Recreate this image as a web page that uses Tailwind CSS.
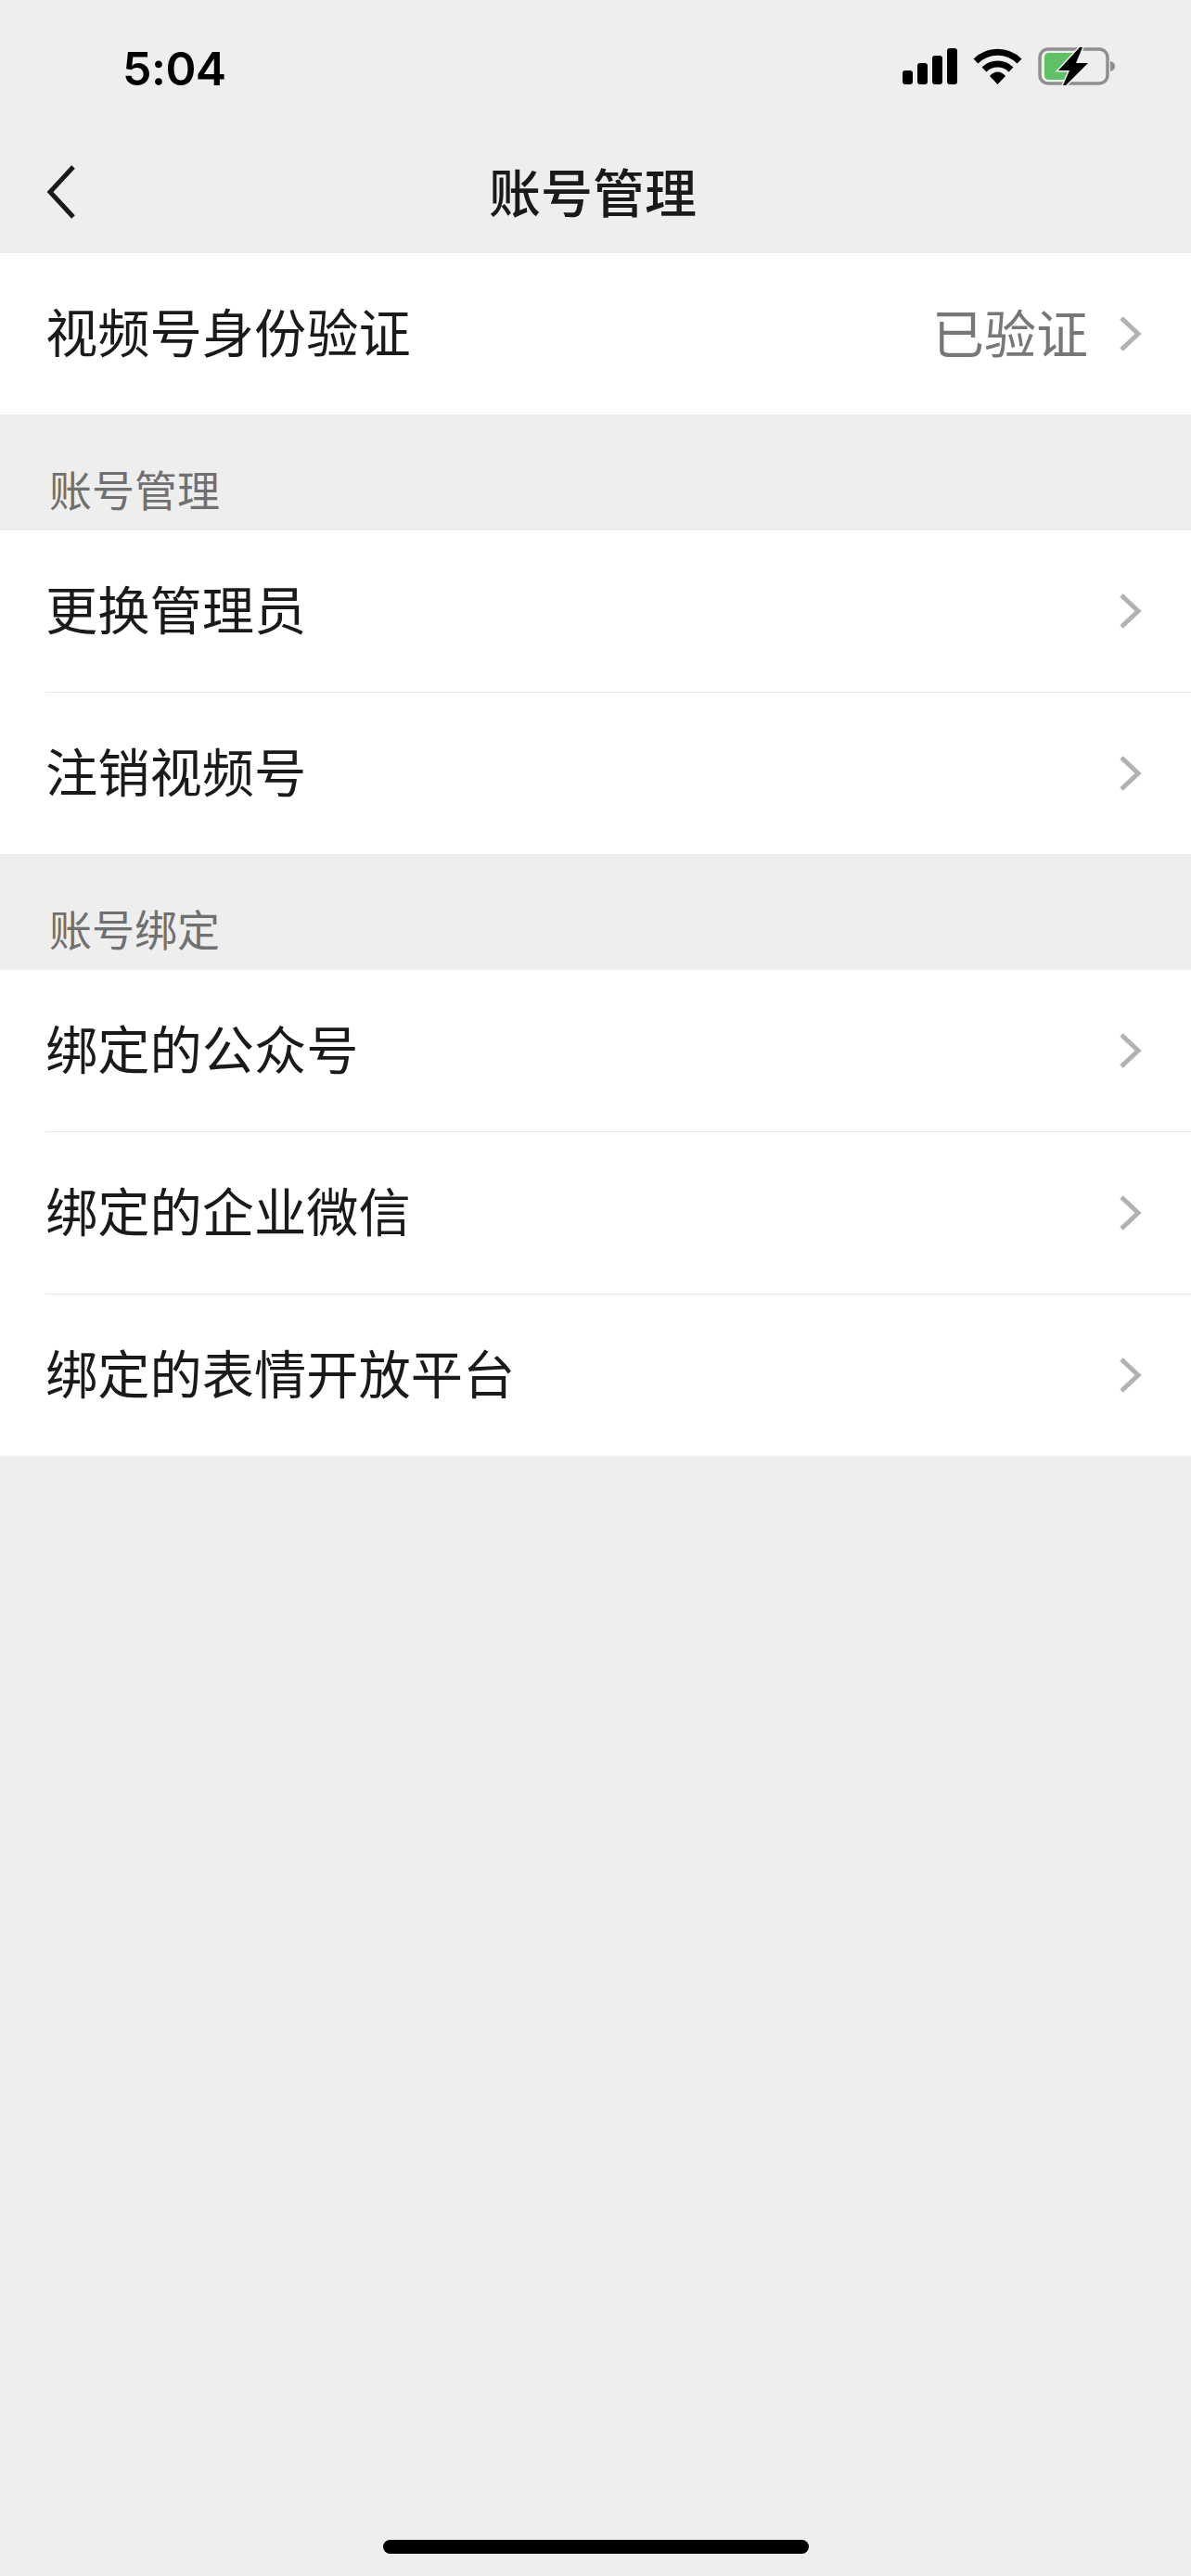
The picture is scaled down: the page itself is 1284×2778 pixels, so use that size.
<!DOCTYPE html>
<html lang="zh-CN">
<head>
<meta charset="utf-8">
<script src="https://cdn.jsdelivr.net/npm/@tailwindcss/browser@4"></script>
<title>账号管理</title>
</head>
<body class="bg-[#eeeeee] font-['Noto_Sans_CJK_SC','Noto_Sans',sans-serif]">
<div class="w-[1284px] h-[2778px] bg-[#eeeeee] flex flex-col relative overflow-hidden">
  <div class="h-[144px] flex items-center justify-between pl-[132px] pr-[82px] shrink-0">
    <span class="font-['Inter',sans-serif] font-semibold text-[50px] leading-none text-black tracking-[-0.5px] pt-[3px]">5:04</span>
    <svg width="229" height="42" viewBox="0 0 229 42" class="block">
      <rect x="0" y="25" width="11" height="15" rx="3" fill="#000"/>
      <rect x="16" y="17" width="11" height="23" rx="3" fill="#000"/>
      <rect x="32" y="9" width="11" height="31" rx="3" fill="#000"/>
      <rect x="48" y="1" width="11" height="39" rx="3" fill="#000"/>
      <path d="M79 15 C92 2 113 2 126 15" fill="none" stroke="#000" stroke-width="7" stroke-linecap="butt"/>
      <path d="M88 24 C96 16 109 16 117 24" fill="none" stroke="#000" stroke-width="7" stroke-linecap="butt"/>
      <path d="M94 31 C99 25 106 25 111 31 L102.500 40 Z" fill="#000"/>
      <rect x="148" y="2" width="73" height="37" rx="9" fill="none" stroke="#8f8f8f" stroke-width="3.500"/>
      <path d="M224 15 C228 16 229 18 229 20.500 C229 23 228 25 224 26 Z" fill="#8f8f8f"/>
      <path d="M158 6 L187 6 L172 24 L182 24 L175 35 L158 35 Q153 35 153 30 L153 11 Q153 6 158 6 Z" fill="#5fc065"/>
      <path d="M191 0 L194 0 L187 17 L200 17 L176 41 L173 41 L180 25 L168 25 Z" fill="#000" stroke="#eeeeee" stroke-width="3" paint-order="stroke"/>
    </svg>
  </div>
  <div class="h-[129px] flex items-center justify-center relative shrink-0 pr-[6px]">
    <svg width="36" height="60" viewBox="0 0 36 60" class="absolute left-[48px] top-[32px]">
      <path d="M31 4 L6 31 L31 58" fill="none" stroke="#1a1a1a" stroke-width="5"/>
    </svg>
    <span class="text-[56px] leading-none font-medium text-[#1a1a1a] pb-[8px]">账号管理</span>
  </div>

  <div class="bg-white shrink-0">
    <div class="h-[174px] flex items-center pl-[49px] pr-[53px]">
      <span class="flex-1 text-[56.250px] leading-none text-[#1a1a1a] pb-[7px]">视频号身份验证</span>
      <span class="text-[56px] leading-none text-[#777777] mr-[32px] pb-[7px]">已验证</span>
      <svg width="26" height="40" viewBox="0 0 26 40" class="block"><path d="M4 3 L22 20 L4 37" fill="none" stroke="#b2b2b2" stroke-width="5"/></svg>
    </div>
  </div>

  <div class="h-[125px] flex items-end pl-[53px] pb-[23px] text-[46px] leading-none text-[#707070] shrink-0">账号管理</div>
  <div class="bg-white shrink-0">
    <div class="h-[174px] flex items-center pl-[49px] pr-[53px]">
      <span class="flex-1 text-[56.250px] leading-none text-[#1a1a1a] pb-[7px]">更换管理员</span>
      <svg width="26" height="40" viewBox="0 0 26 40" class="block"><path d="M4 3 L22 20 L4 37" fill="none" stroke="#b2b2b2" stroke-width="5"/></svg>
    </div>
    <div class="ml-[49px] h-px bg-[#e5e5e5]"></div>
    <div class="h-[174px] flex items-center pl-[49px] pr-[53px]">
      <span class="flex-1 text-[56.250px] leading-none text-[#1a1a1a] pb-[7px]">注销视频号</span>
      <svg width="26" height="40" viewBox="0 0 26 40" class="block"><path d="M4 3 L22 20 L4 37" fill="none" stroke="#b2b2b2" stroke-width="5"/></svg>
    </div>
  </div>

  <div class="h-[125px] flex items-end pl-[53px] pb-[23px] text-[46px] leading-none text-[#707070] shrink-0">账号绑定</div>
  <div class="bg-white shrink-0">
    <div class="h-[174px] flex items-center pl-[49px] pr-[53px]">
      <span class="flex-1 text-[56.250px] leading-none text-[#1a1a1a] pb-[7px]">绑定的公众号</span>
      <svg width="26" height="40" viewBox="0 0 26 40" class="block"><path d="M4 3 L22 20 L4 37" fill="none" stroke="#b2b2b2" stroke-width="5"/></svg>
    </div>
    <div class="ml-[49px] h-px bg-[#e5e5e5]"></div>
    <div class="h-[174px] flex items-center pl-[49px] pr-[53px]">
      <span class="flex-1 text-[56.250px] leading-none text-[#1a1a1a] pb-[7px]">绑定的企业微信</span>
      <svg width="26" height="40" viewBox="0 0 26 40" class="block"><path d="M4 3 L22 20 L4 37" fill="none" stroke="#b2b2b2" stroke-width="5"/></svg>
    </div>
    <div class="ml-[49px] h-px bg-[#e5e5e5]"></div>
    <div class="h-[174px] flex items-center pl-[49px] pr-[53px]">
      <span class="flex-1 text-[56.250px] leading-none text-[#1a1a1a] pb-[7px]">绑定的表情开放平台</span>
      <svg width="26" height="40" viewBox="0 0 26 40" class="block"><path d="M4 3 L22 20 L4 37" fill="none" stroke="#b2b2b2" stroke-width="5"/></svg>
    </div>
  </div>

  <div class="absolute left-[413px] top-[2739px] w-[459px] h-[15px] rounded-full bg-black"></div>
</div>
</body>
</html>
